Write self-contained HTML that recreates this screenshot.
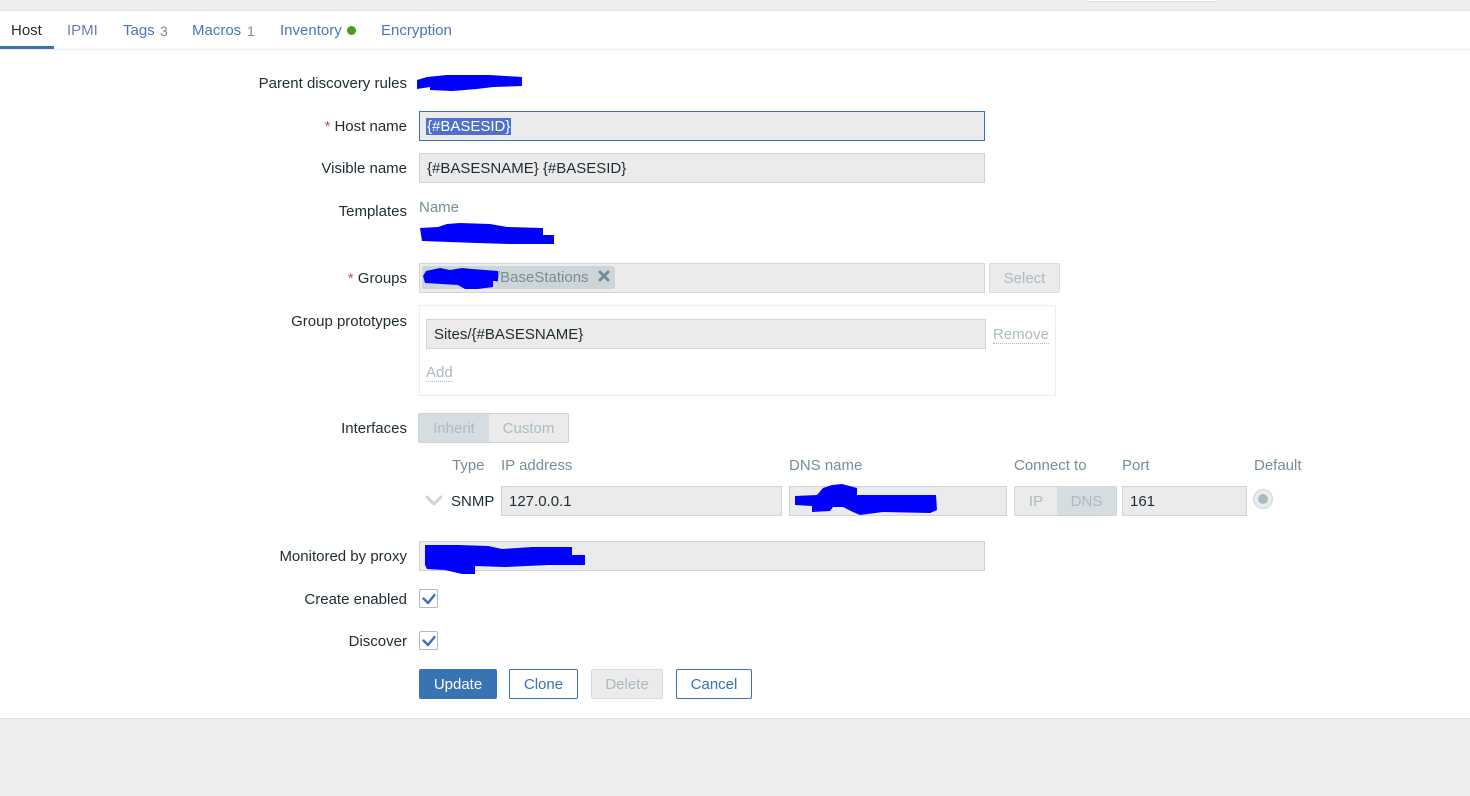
<!DOCTYPE html>
<html><head><meta charset="utf-8"><style>
html,body{margin:0;padding:0}
body{width:1470px;height:796px;position:relative;overflow:hidden;background:#ebedef;font-family:"Liberation Sans",Arial,sans-serif;font-size:15px;color:#1f2c33}
#main{position:absolute;left:0;top:10px;width:1470px;height:707px;background:#fff;border-top:1px solid #dfe4e7;border-bottom:1px solid #dfe4e7;box-sizing:content-box}
.t{position:absolute;white-space:nowrap;line-height:18px}
.l{position:absolute;white-space:nowrap;line-height:18px;right:1063px;text-align:right}
.i{position:absolute;box-sizing:border-box;background:#ebebeb;border:1px solid #cdd5d9;line-height:30px;padding-left:7px;white-space:nowrap}
.b{position:absolute;box-sizing:border-box;border-radius:2px;text-align:center;line-height:30px;white-space:nowrap}
.o{border:1px solid #3873b3;color:#3873b3;background:#fff}
.d{border:1px solid #d5dbdf;color:#acbbc2;background:#ebebeb}
.c{position:absolute;left:419px;width:19px;height:19px;box-sizing:border-box;border:1px solid #aebcc4;border-radius:2px;background:#fff}
.g{color:#768d99}
.a{color:#4a76b8}
.m{color:#acbbc2;border-bottom:1px dotted #acbbc2;line-height:17px}
.tg{position:absolute;top:413px;height:30px;box-sizing:border-box;border:1px solid #cdd5d9;text-align:center;line-height:30px;color:#acbbc2}
svg.k{position:absolute;left:0;top:0}
</style></head><body>
<div style="position:absolute;left:1087px;top:0;width:130px;height:1px;background:#fff;border-bottom:1px solid #dfe2e5"></div>
<div id="main"></div>
<div style="position:absolute;left:0;top:49px;width:1470px;height:1px;background:#ebeef0"></div>
<div style="position:absolute;left:0;top:46px;width:54px;height:3px;background:#3873b3"></div>
<div class="t" style="left:11px;top:22px">Host</div>
<div class="t" style="left:67px;top:22px;color:#6b80c0">IPMI</div>
<div class="t a" style="left:123px;top:22px">Tags</div>
<div class="t g" style="left:160px;top:22px;font-size:14px">3</div>
<div class="t a" style="left:192px;top:22px">Macros</div>
<div class="t g" style="left:247px;top:22px;font-size:14px">1</div>
<div class="t a" style="left:280px;top:22px">Inventory</div>
<div style="position:absolute;left:347px;top:26px;width:9px;height:9px;border-radius:50%;background:#429e1c"></div>
<div class="t a" style="left:381px;top:22px">Encryption</div>

<div class="l" style="top:75px">Parent discovery rules</div>
<div class="l" style="top:118px"><span style="color:#d64e4e">*</span> Host name</div>
<div class="l" style="top:160px">Visible name</div>
<div class="l" style="top:203px">Templates</div>
<div class="l" style="top:270px"><span style="color:#d64e4e">*</span> Groups</div>
<div class="l" style="top:313px">Group prototypes</div>
<div class="l" style="top:420px">Interfaces</div>
<div class="l" style="top:548px">Monitored by proxy</div>
<div class="l" style="top:591px">Create enabled</div>
<div class="l" style="top:633px">Discover</div>

<div class="i" style="left:419px;top:111px;width:566px;height:30px;border-color:#3873b3;padding-left:6px"><span style="background:#4f6fcb;color:#fff;padding:0 1px">{#BASESID}</span></div>
<div class="i" style="left:419px;top:153px;width:566px;height:30px">{#BASESNAME} {#BASESID}</div>
<div class="t g" style="left:419px;top:199px">Name</div>

<div class="i" style="left:419px;top:263px;width:566px;height:30px"></div>
<div style="position:absolute;left:422px;top:266px;width:193px;height:23px;background:#cdd5d9;border-radius:2px"></div>
<div class="t" style="left:496px;top:269px;color:#768d99">/BaseStations</div>
<div class="b d" style="left:989px;top:263px;width:71px;height:30px">Select</div>

<div style="position:absolute;left:419px;top:305px;width:637px;height:91px;box-sizing:border-box;border:1px solid #ebeef0"></div>
<div class="i" style="left:426px;top:319px;width:560px;height:30px">Sites/{#BASESNAME}</div>
<div class="t m" style="left:993px;top:326px">Remove</div>
<div class="t m" style="left:426px;top:364px">Add</div>

<div class="tg" style="left:418px;width:71px;background:#d5dde1;border-right:0;border-radius:2px 0 0 2px">Inherit</div>
<div class="tg" style="left:489px;width:80px;background:#ebebeb;border-left:0;border-radius:0 2px 2px 0">Custom</div>

<div class="t g" style="left:452px;top:457px">Type</div>
<div class="t g" style="left:501px;top:457px">IP address</div>
<div class="t g" style="left:789px;top:457px">DNS name</div>
<div class="t g" style="left:1014px;top:457px">Connect to</div>
<div class="t g" style="left:1122px;top:457px">Port</div>
<div class="t g" style="left:1254px;top:457px">Default</div>

<div class="t" style="left:451px;top:493px">SNMP</div>
<div class="i" style="left:501px;top:486px;width:281px;height:30px">127.0.0.1</div>
<div class="i" style="left:789px;top:486px;width:218px;height:30px"></div>
<div class="tg" style="left:1014px;top:486px;width:43px;background:#ebebeb;border-right:0;border-radius:2px 0 0 2px">IP</div>
<div class="tg" style="left:1057px;top:486px;width:60px;background:#d5dde1;border-left:0;border-radius:0 2px 2px 0">DNS</div>
<div class="i" style="left:1122px;top:486px;width:125px;height:30px">161</div>
<div style="position:absolute;left:1253px;top:489px;width:20px;height:20px;box-sizing:border-box;border-radius:50%;background:#ebebeb;border:1px solid #cdd5d9"></div>
<div style="position:absolute;left:1258px;top:494px;width:10px;height:10px;border-radius:50%;background:#acbbc2"></div>

<div class="i" style="left:419px;top:541px;width:566px;height:30px"></div>

<div class="c" style="top:589px"></div>
<div class="c" style="top:631px"></div>

<div class="b" style="left:419px;top:669px;width:78px;height:30px;background:#3873b3;color:#fff;line-height:32px">Update</div>
<div class="b o" style="left:509px;top:669px;width:69px;height:30px">Clone</div>
<div class="b d" style="left:591px;top:669px;width:72px;height:30px">Delete</div>
<div class="b o" style="left:676px;top:669px;width:76px;height:30px">Cancel</div>

<svg class="k" width="1470" height="796" viewBox="0 0 1470 796">
<g fill="#0000ff">
<path d="M417 80L427 77L447 75L490 75L522 77L522 86L493 87L477 89L452 91L430 90L430 87L417 89Z"/>
<path d="M420 228L438 227L447 224L460 223L490 224L507 227L543 228L543 235L554 235L554 244L510 244L477 243L422 241Z"/>
<path d="M423 276L426 271L440 268L450 270L462 268L472 269L498 271L498 281L493 281L493 287L478 289L465 289L458 285L425 283Z"/>
<path d="M795 496L817 495L823 488L832 485L842 484L857 488L857 495L936 495L937 510L930 513L883 512L860 515L853 512L843 507L833 507L830 511L812 512L812 506L795 505Z"/>
<path d="M425 545L458 545L488 546L502 549L532 547L572 547L572 555L585 555L585 565L548 565L505 567L475 566L475 574L462 574L445 570L427 569L425 565Z"/>
</g>
<g fill="none" stroke-linecap="round" stroke-linejoin="round">
<path d="M427 497L434 504L441 497" stroke="#cdd5d9" stroke-width="3"/>
<path d="M423.500 598.500L428 603L434.500 595" stroke="#3873b3" stroke-width="2.400"/>
<path d="M423.500 640.500L428 645L434.500 637" stroke="#3873b3" stroke-width="2.400"/>
<path d="M600 272L608 280M608 272L600 280" stroke="#768d99" stroke-width="3"/>
</g>
</svg>
</body></html>
